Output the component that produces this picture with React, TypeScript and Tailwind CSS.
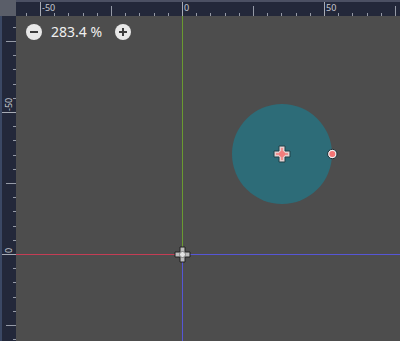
import React from 'react'

const STEP = 14.2
const OX = 182
const OY = 254

function ticks(origin: number, from: number, to: number) {
  const out: { pos: number; k: number }[] = []
  for (let k = -40; k <= 40; k++) {
    const pos = origin + k * STEP
    if (pos >= from && pos <= to) out.push({ pos, k })
  }
  return out
}

function TopRuler() {
  return (
    <svg width={384} height={14} viewBox="16 2 384 14" className="block">
      {ticks(OX, 16, 400).map(({ pos, k }) => {
        const x = Math.round(pos) + 0.5
        if (k % 10 === 0)
          return (
            <g key={k}>
              <line x1={x} y1={2} x2={x} y2={16} stroke="#a7abb5" />
              <text x={x + 1.5} y={10.5} fontSize={9} fill="#c6c9d0" fontFamily="Noto Sans, sans-serif">
                {(k / 10) * 50}
              </text>
            </g>
          )
        if (k % 5 === 0) return <line key={k} x1={x} y1={6} x2={x} y2={16} stroke="#959aa6" />
        return <line key={k} x1={x} y1={13} x2={x} y2={16} stroke="#959aa6" />
      })}
    </svg>
  )
}

function LeftRuler() {
  return (
    <svg width={14} height={325} viewBox="2 16 14 325" className="block">
      {ticks(OY, 16, 341).map(({ pos, k }) => {
        const y = Math.round(pos) + 0.5
        if (k % 10 === 0)
          return (
            <g key={k}>
              <line x1={2} y1={y} x2={16} y2={y} stroke="#a7abb5" />
              <text
                transform={`translate(11.5 ${y - 1.5}) rotate(-90)`}
                fontSize={9}
                fill="#c6c9d0"
                fontFamily="Noto Sans, sans-serif"
              >
                {(k / 10) * 50}
              </text>
            </g>
          )
        if (k % 5 === 0) return <line key={k} x1={6} y1={y} x2={16} y2={y} stroke="#959aa6" />
        return <line key={k} x1={13} y1={y} x2={16} y2={y} stroke="#959aa6" />
      })}
    </svg>
  )
}

function plusPath(cx: number, cy: number, arm: number, half: number) {
  return `M${cx - half} ${cy - arm} H${cx + half} V${cy - half} H${cx + arm} V${cy + half} H${cx + half} V${cy + arm} H${cx - half} V${cy + half} H${cx - arm} V${cy - half} H${cx - half} Z`
}

function Canvas() {
  return (
    <svg width={384} height={325} viewBox="16 16 384 325" className="block absolute inset-0">
      <line x1={OX + 0.5} y1={16} x2={OX + 0.5} y2={OY} stroke="#6a9a30" />
      <line x1={OX + 0.5} y1={OY} x2={OX + 0.5} y2={341} stroke="#5656d6" />
      <line x1={16} y1={OY + 0.5} x2={OX} y2={OY + 0.5} stroke="#c43d55" />
      <line x1={OX} y1={OY + 0.5} x2={400} y2={OY + 0.5} stroke="#5656d6" />

      <circle cx={282} cy={154} r={50} fill="#2d6c78" />

      <path d={plusPath(282, 154, 8, 3)} fill="#e6cfcf" stroke="#1f4148" strokeWidth={1} />
      <line x1={276} y1={154} x2={288} y2={154} stroke="#f07a7a" strokeWidth={1.5} />
      <line x1={282} y1={148} x2={282} y2={160} stroke="#f07a7a" strokeWidth={1.5} />
      <circle cx={282} cy={154} r={3} fill="#f47c7c" />

      <circle cx={332.3} cy={154} r={4.7} fill="#f2f2f2" stroke="#1c2e36" strokeWidth={1} />
      <circle cx={332.3} cy={154} r={3} fill="#f47474" />

      <path d={plusPath(182.5, 254.5, 7.5, 2.5)} fill="#bdbdbd" stroke="#202020" strokeWidth={1} />
      <circle cx={182.5} cy={254.5} r={3} fill="#e4e4e4" stroke="#6a6a6a" strokeWidth={0.8} />
    </svg>
  )
}

function RoundButton({ plus }: { plus?: boolean }) {
  return (
    <div className="w-4 h-4 rounded-full bg-[#e8e8e8] relative shrink-0">
      <div className="absolute left-[4px] top-[7px] w-2 h-[2px] bg-[#3c3c3c]" />
      {plus && <div className="absolute left-[7px] top-[4px] w-[2px] h-2 bg-[#3c3c3c]" />}
    </div>
  )
}

export default function App() {
  return (
    <div className="w-[400px] h-[341px] flex flex-col bg-[#4d4d4d] overflow-hidden font-['Noto_Sans',sans-serif]">
      <div className="flex h-4 shrink-0">
        <div className="w-4 bg-[#5a5e69]" />
        <div className="flex-1 border-t-2 border-[#4b5063] bg-[#23283a] overflow-hidden">
          <TopRuler />
        </div>
      </div>
      <div className="flex flex-1 min-h-0">
        <div className="w-4 shrink-0 border-l-2 border-[#3b4864] bg-[#23283a] overflow-hidden">
          <LeftRuler />
        </div>
        <div className="flex-1 relative overflow-hidden">
          <Canvas />
          <div className="absolute left-[10px] top-[8px] flex items-center">
            <RoundButton />
            <span className="ml-[9px] text-[14px] leading-4 text-[#f0f0f0]">283.4 %</span>
            <div className="ml-[13px]">
              <RoundButton plus />
            </div>
          </div>
        </div>
      </div>
    </div>
  )
}
